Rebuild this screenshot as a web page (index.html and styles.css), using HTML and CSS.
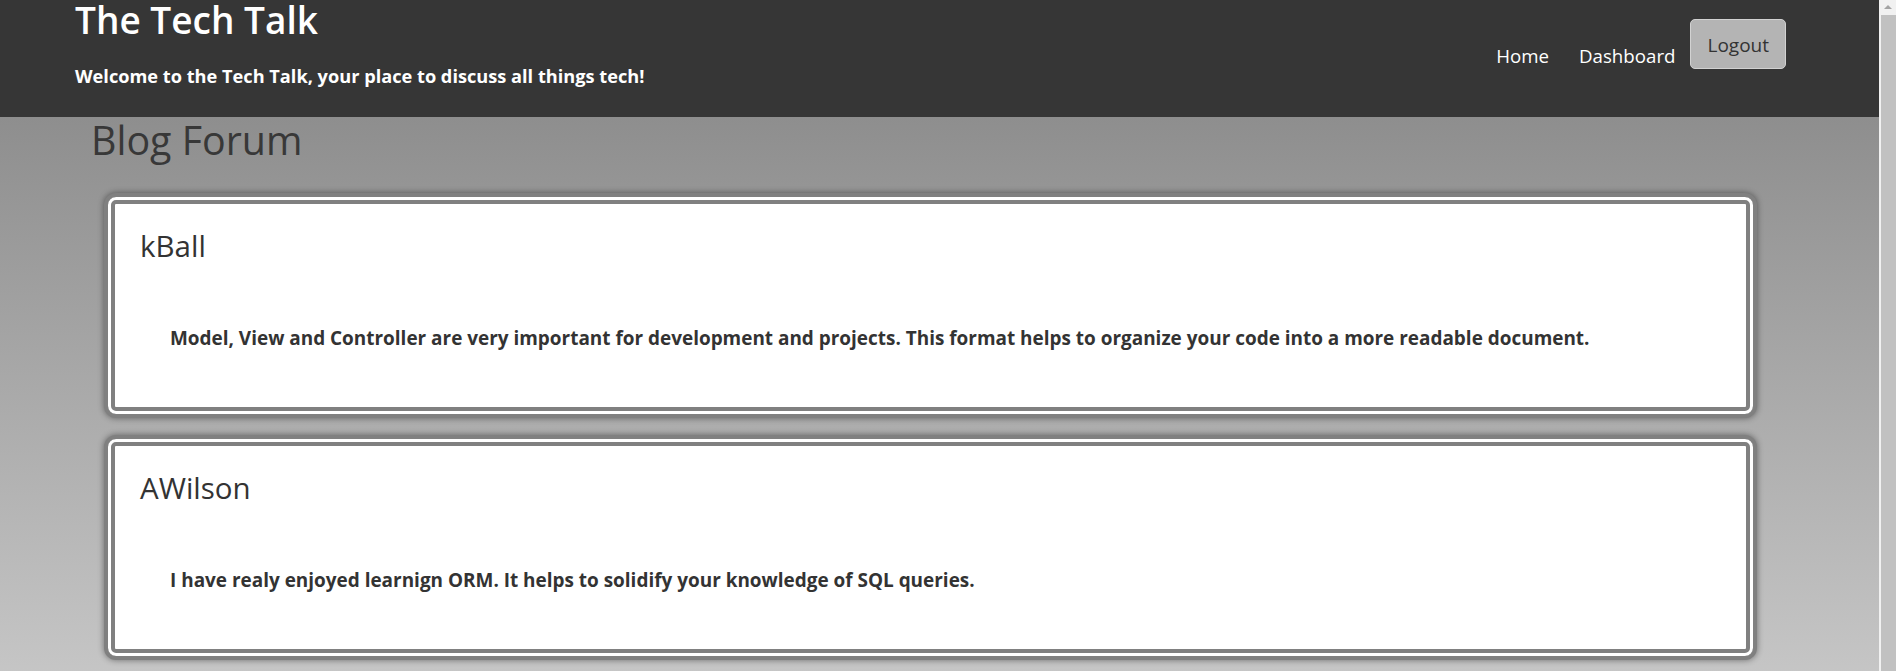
FILE: index.html
```html
<!DOCTYPE html>
<html lang="en">
<head>
<meta charset="utf-8">
<title>The Tech Talk</title>
<link rel="stylesheet" href="styles.css">
</head>
<body>
<div class="page">
  <header class="site-header">
    <div class="brand">
      <h1 class="brand-title">The Tech Talk</h1>
      <p class="brand-tagline">Welcome to the Tech Talk, your place to discuss all things tech!</p>
    </div>
    <nav class="nav">
      <a class="nav-link nav-home" href="#">Home</a>
      <a class="nav-link nav-dash" href="#">Dashboard</a>
      <button class="logout-btn" type="button">Logout</button>
    </nav>
  </header>
  <main class="forum">
    <h2 class="forum-title">Blog Forum</h2>
    <article class="post-card">
      <h3 class="post-user">kBall</h3>
      <p class="post-body">Model, View and Controller are very important for development and projects. This format helps to organize your code into a more readable document.</p>
    </article>
    <article class="post-card">
      <h3 class="post-user">AWilson</h3>
      <p class="post-body">I have realy enjoyed learnign ORM. It helps to solidify your knowledge of SQL queries.</p>
    </article>
  </main>
</div>
<div class="scrollbar" aria-hidden="true">
  <div class="scrollbar-arrow"></div>
  <div class="scrollbar-thumb"></div>
</div>
</body>
</html>
```
FILE: styles.css
```css
html, body {
  margin: 0;
  padding: 0;
}

body {
  font-family: "Open Sans", "Noto Sans", sans-serif;
  color: #333;
  background: #c6c6c6;
  padding-right: 17px;
}

.page {
  min-height: 100vh;
}

/* Header */
.site-header {
  box-sizing: border-box;
  height: 117px;
  background: #363636;
  color: #fff;
  display: flex;
  justify-content: space-between;
  align-items: flex-start;
  padding: 1px 93px 0 75px;
}

.brand-title {
  margin: 0;
  font-size: 37px;
  line-height: 37px;
  font-weight: 600;
}

.brand-tagline {
  margin: 29px 0 0;
  font-size: 18.2px;
  line-height: 18px;
  font-weight: 700;
}

.nav {
  display: flex;
  align-items: flex-start;
  margin-top: 18px;
}

.nav-link {
  color: #fff;
  text-decoration: none;
  font-size: 18.7px;
  line-height: 19px;
  margin-top: 27px;
}

.nav-home {
  margin-right: 30px;
}

.nav-dash {
  margin-right: 15px;
}

.logout-btn {
  box-sizing: border-box;
  height: 50px;
  padding: 1px 16px 0;
  border: 1px solid #d2d2d2;
  border-radius: 5px;
  background: #b4b4b4;
  color: #333;
  font-family: "Open Sans", "Noto Sans", sans-serif;
  font-size: 19px;
  line-height: 46px;
}

/* Main */
.forum {
  background: linear-gradient(to bottom, #8e8e8e 0%, #c9c9c9 100%);
  padding: 4px 122px 30px 104px;
  min-height: 560px;
  box-sizing: border-box;
}

.forum-title {
  margin: 0 0 33px -13px;
  font-size: 39.4px;
  line-height: 39px;
  font-weight: 400;
  color: #383838;
}

.post-card {
  box-sizing: border-box;
  height: 225px;
  background: #fff;
  border: 4px solid #808080;
  border-radius: 12px;
  box-shadow:
    inset 0 0 0 3px #fff,
    inset 0 0 0 7px #808080,
    0 0 6px rgba(0, 0, 0, 0.45);
  padding: 34px 32px 0;
  margin-bottom: 17px;
}

.post-user {
  margin: 0;
  font-size: 29.5px;
  line-height: 29px;
  font-weight: 400;
  color: #333;
}

.post-body {
  margin: 69px 0 0 30px;
  font-size: 18.95px;
  line-height: 19px;
  font-weight: 700;
  color: #333;
}

/* Fake classic scrollbar */
.scrollbar {
  position: fixed;
  top: 0;
  right: 0;
  width: 17px;
  height: 100vh;
  background: #f1f1f1;
}

.scrollbar-arrow {
  position: absolute;
  top: 5px;
  left: 5px;
  width: 0;
  height: 0;
  border-left: 4px solid transparent;
  border-right: 4px solid transparent;
  border-bottom: 4px solid #a3a3a3;
}

.scrollbar-thumb {
  position: absolute;
  top: 15px;
  left: 2px;
  right: 0;
  bottom: 0;
  background: #c1c1c1;
}
```
